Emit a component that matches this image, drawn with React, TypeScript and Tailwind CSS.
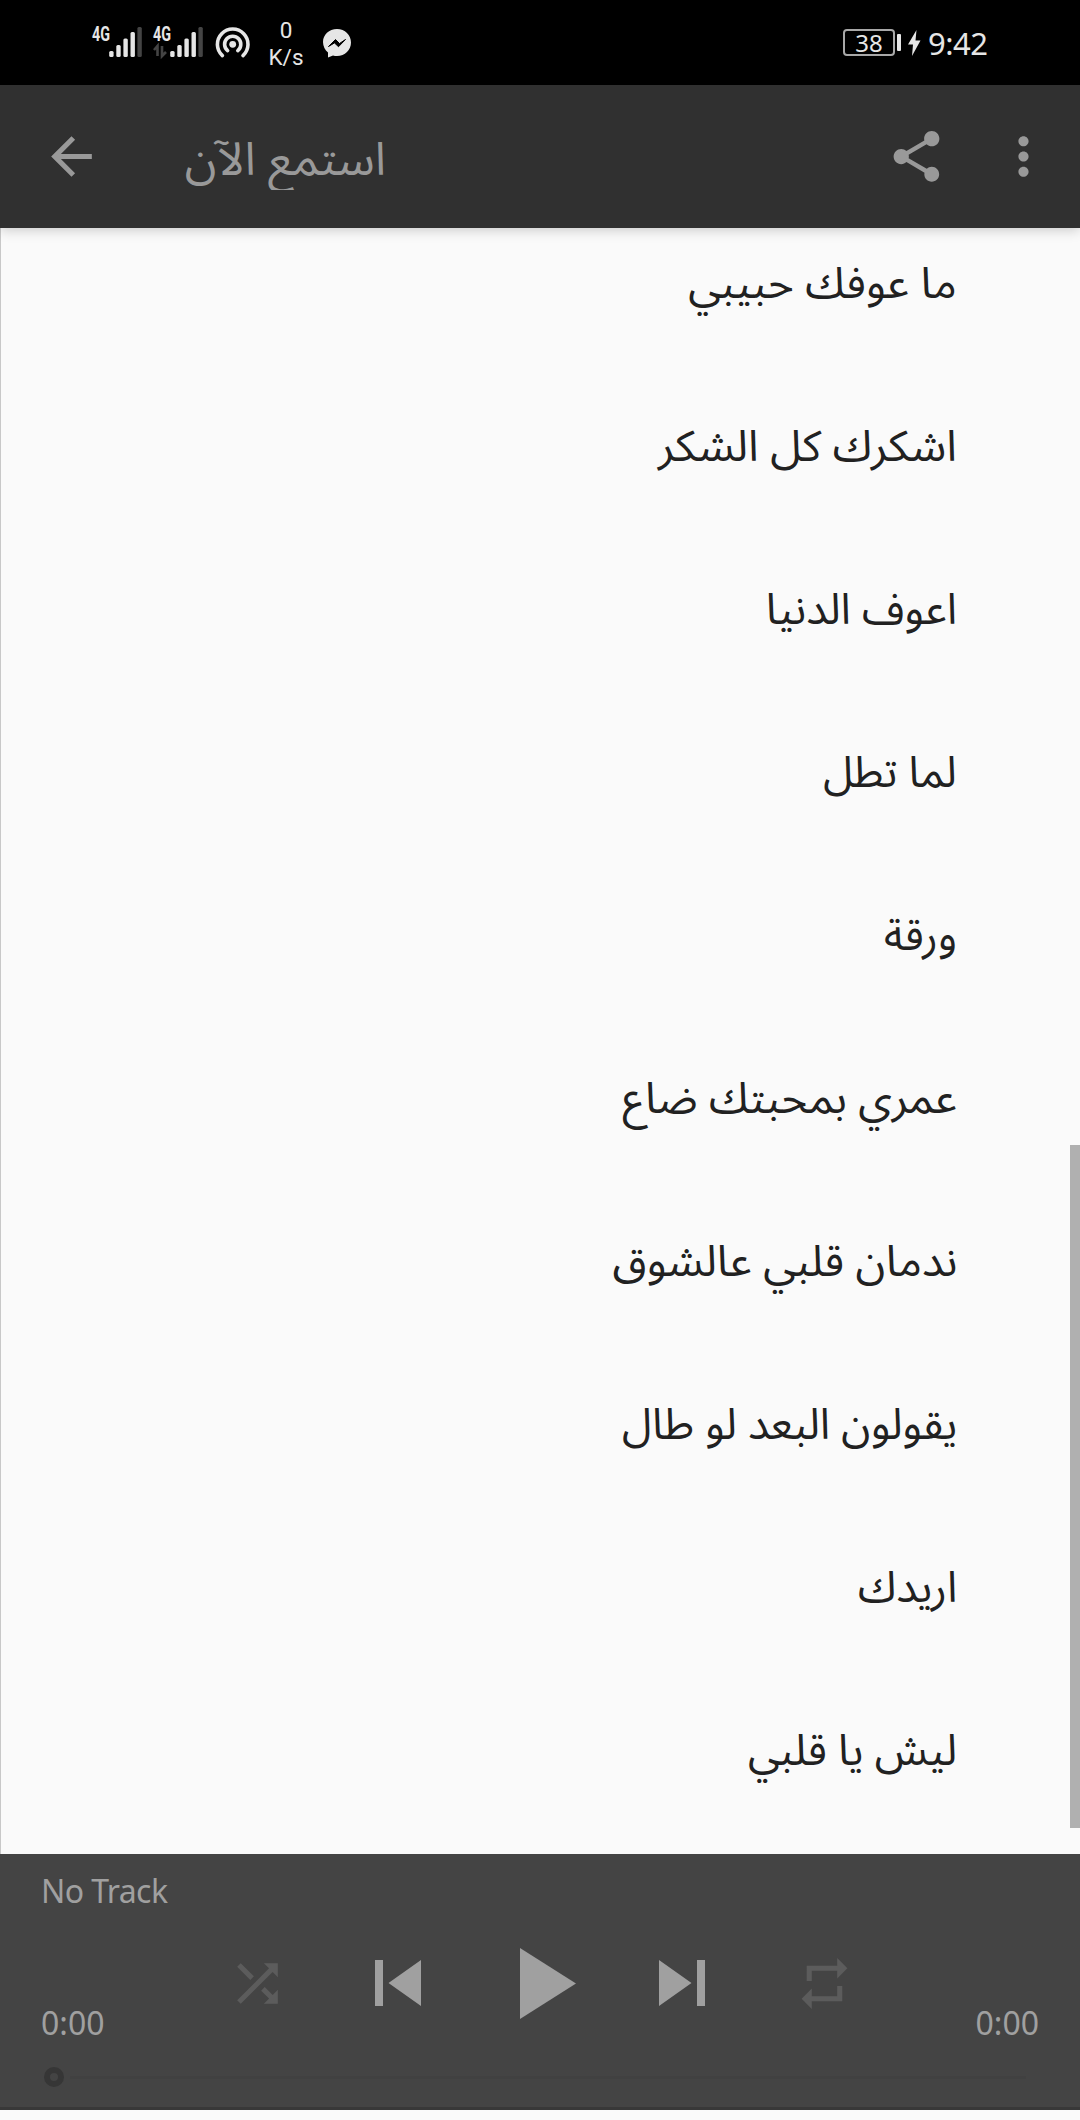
import { MdArrowBack, MdMoreVert, MdRepeat, MdShare, MdShuffle } from "react-icons/md";

interface Track {
  title: string;
  stretch: number;
}

const TRACKS: Track[] = [
  { title: "ما عوفك حبيبي", stretch: 1.03 },
  { title: "اشكرك كل الشكر", stretch: 1.038 },
  { title: "اعوف الدنيا", stretch: 1.006 },
  { title: "لما تطل", stretch: 0.99 },
  { title: "ورقة", stretch: 0.985 },
  { title: "عمري بمحبتك ضاع", stretch: 1.026 },
  { title: "ندمان قلبي عالشوق", stretch: 1.028 },
  { title: "يقولون البعد لو طال", stretch: 1.006 },
  { title: "اريدك", stretch: 1.01 },
  { title: "ليش يا قلبي", stretch: 1.005 },
];

function Signal({ data = false }: { data?: boolean }) {
  return (
    <svg width="50" height="40" viewBox="0 -8 50 40" className="shrink-0 overflow-visible">
      <text x="0" y="15" fontSize="20" fontWeight="700" fill="#e6e6e6" textLength="18" lengthAdjust="spacingAndGlyphs" fontFamily="Roboto, sans-serif">
        4G
      </text>
      {data && <path d="M1 24l3.5-4v10M9 20v10l4-4" fill="none" stroke="#444" strokeWidth="2.6" />}
      <g fill="#e6e6e6">
        <rect x="17.2" y="25" width="4.4" height="6" rx="1.5" />
        <rect x="24.3" y="19" width="4.4" height="12" rx="1.5" />
        <rect x="31.4" y="12.5" width="4.4" height="18.5" rx="1.5" />
        <rect x="38.5" y="6" width="4.4" height="25" rx="1.5" />
        <rect x="45.4" y="1" width="4.4" height="30" rx="1.5" fill="#444" />
      </g>
    </svg>
  );
}

function StatusBar() {
  return (
    <div className="flex h-[85px] items-start bg-black pl-[92px] text-[#e6e6e6]">
      <div className="mt-[18px] flex gap-[11px]">
        <Signal />
        <Signal data />
      </div>
      <svg width="36" height="34" viewBox="0 0 36 34" className="mt-[26px] ml-[12px]" fill="none" stroke="#e6e6e6" strokeLinecap="round" strokeWidth="3.6">
        <circle cx="17.7" cy="18.3" r="3.4" fill="#e6e6e6" stroke="none" />
        <path d="M12.6 24.6a8.1 8.1 0 1 1 10.2 0" />
        <path d="M7.4 29.6a15.3 15.3 0 1 1 20.6 0" />
      </svg>
      <div className="mt-[17px] ml-[15px] w-[40px] text-center font-['Roboto',sans-serif] text-[22.5px] leading-[27px]">
        <p>0</p>
        <p>K/s</p>
      </div>
      <svg width="30" height="32" viewBox="0 0 30 32" className="mt-[28px] ml-[16px]">
        <path d="M15 1C7 1 1 6.700 1 14c0 4.300 2 8 5 10.500V29.500l5-2.100c1.300.4 2.600.5 4 .5 8 0 14-6.200 14-13.500S23 1 15 1z" fill="#e6e6e6" />
        <path d="M6.500 18.500l7-7 4 4 6-4-7 7.200-4-3.800z" fill="#000" stroke="#000" />
      </svg>
      <div className="mt-[29px] ml-[491px] flex h-[27px] w-[52px] items-center justify-center rounded-[4px] border-2 border-[#a8a8a8] font-['Noto_Sans',sans-serif] text-[24px] leading-none">
        38
      </div>
      <div className="mt-[34px] ml-[2px] h-[17px] w-[4px] rounded-[1px] bg-[#e6e6e6]" />
      <svg width="13" height="26" viewBox="0 0 13 26" className="mt-[30px] ml-[7px]">
        <path d="M8.500 0L0 14.500h5L4 26l8.500-15.500H7.500z" fill="#e6e6e6" />
      </svg>
      <p className="mt-[23px] ml-[7px] font-['Noto_Sans',sans-serif] text-[31px] leading-[40px] tracking-[-0.5px]">9:42</p>
    </div>
  );
}

function AppBar() {
  return (
    <header className="relative z-10 flex h-[143px] items-center bg-[#303030] text-[#999] shadow-[0_2px_12px_rgba(0,0,0,0.2)]">
      <MdArrowBack size={61} className="ml-[41px]" />
      {/* the title box is shorter than the deepest descender */}
      <h1 dir="rtl" className="mt-[2px] ml-[82px] h-[65px] w-[202px] origin-right scale-x-[1.025] overflow-hidden font-['Noto_Sans_Arabic','Noto_Sans','DejaVu_Sans',sans-serif] text-[46px] leading-[71px] whitespace-nowrap">
        استمع الآن
      </h1>
      <MdShare size={61} className="mb-px ml-[500px]" />
      <MdMoreVert size={61} className="ml-[46px]" />
    </header>
  );
}

function Player() {
  return (
    <footer className="h-[256px] border-b-[3px] border-[#383838] bg-[#444] font-['Noto_Sans',sans-serif] text-[32px] text-[#a0a0a0]">
      <p className="h-[75px] pt-[15px] pl-[41px] leading-[44px] tracking-[-0.6px]">No Track</p>
      <div className="flex h-[130px] justify-between px-[41px]">
        <p className="w-[100px] pt-[72px] leading-[44px]">0:00</p>
        <div className="flex h-[108px] grow items-center">
          <MdShuffle size={61} className="ml-[86px] text-[#5c5c5c]" />
          <svg width="46" height="46" viewBox="0 0 46 46" fill="currentColor" className="ml-[87px]">
            <path d="M0 0h8v46H0zM46 0v46L13.500 23z" />
          </svg>
          <svg width="56" height="71" viewBox="0 0 56 71" fill="currentColor" className="ml-[99px]">
            <path d="M0 0l56 35.500L0 71z" />
          </svg>
          <svg width="46" height="46" viewBox="0 0 46 46" fill="currentColor" className="ml-[83px]">
            <path d="M38 0h8v46h-8zM0 0l32.500 23L0 46z" />
          </svg>
          <MdRepeat size={61} className="ml-[89px] text-[#5c5c5c]" />
        </div>
        <p className="w-[100px] pt-[72px] text-right leading-[44px]">0:00</p>
      </div>
      <div className="flex items-center gap-[6px] pt-[8px] pl-[44px]">
        <div className="size-[20px] rounded-full border-[6px] border-[#363636]" />
        <div className="h-[3px] w-[956px] bg-[#414141]" />
      </div>
    </footer>
  );
}

export default function App() {
  return (
    <div className="flex h-[2120px] w-[1080px] flex-col overflow-hidden bg-[#fafafa]">
      <StatusBar />
      <AppBar />
      <main className="relative h-[1626px] border-l border-[#c8c8c8]">
        <ul dir="rtl" className="pr-[123px] font-['Noto_Sans_Arabic','Noto_Sans','DejaVu_Sans',sans-serif] text-[43px] text-[#212121]">
          {TRACKS.map((track) => (
            <li key={track.title} className="h-[163px] pt-[27px] leading-[60px] whitespace-nowrap">
              <span className="inline-block origin-right" style={{ transform: `scaleX(${track.stretch})` }}>
                {track.title}
              </span>
            </li>
          ))}
        </ul>
        <div className="absolute top-[917px] right-0 h-[683px] w-[10px] bg-[#b0b0b0]" />
      </main>
      <Player />
    </div>
  );
}
